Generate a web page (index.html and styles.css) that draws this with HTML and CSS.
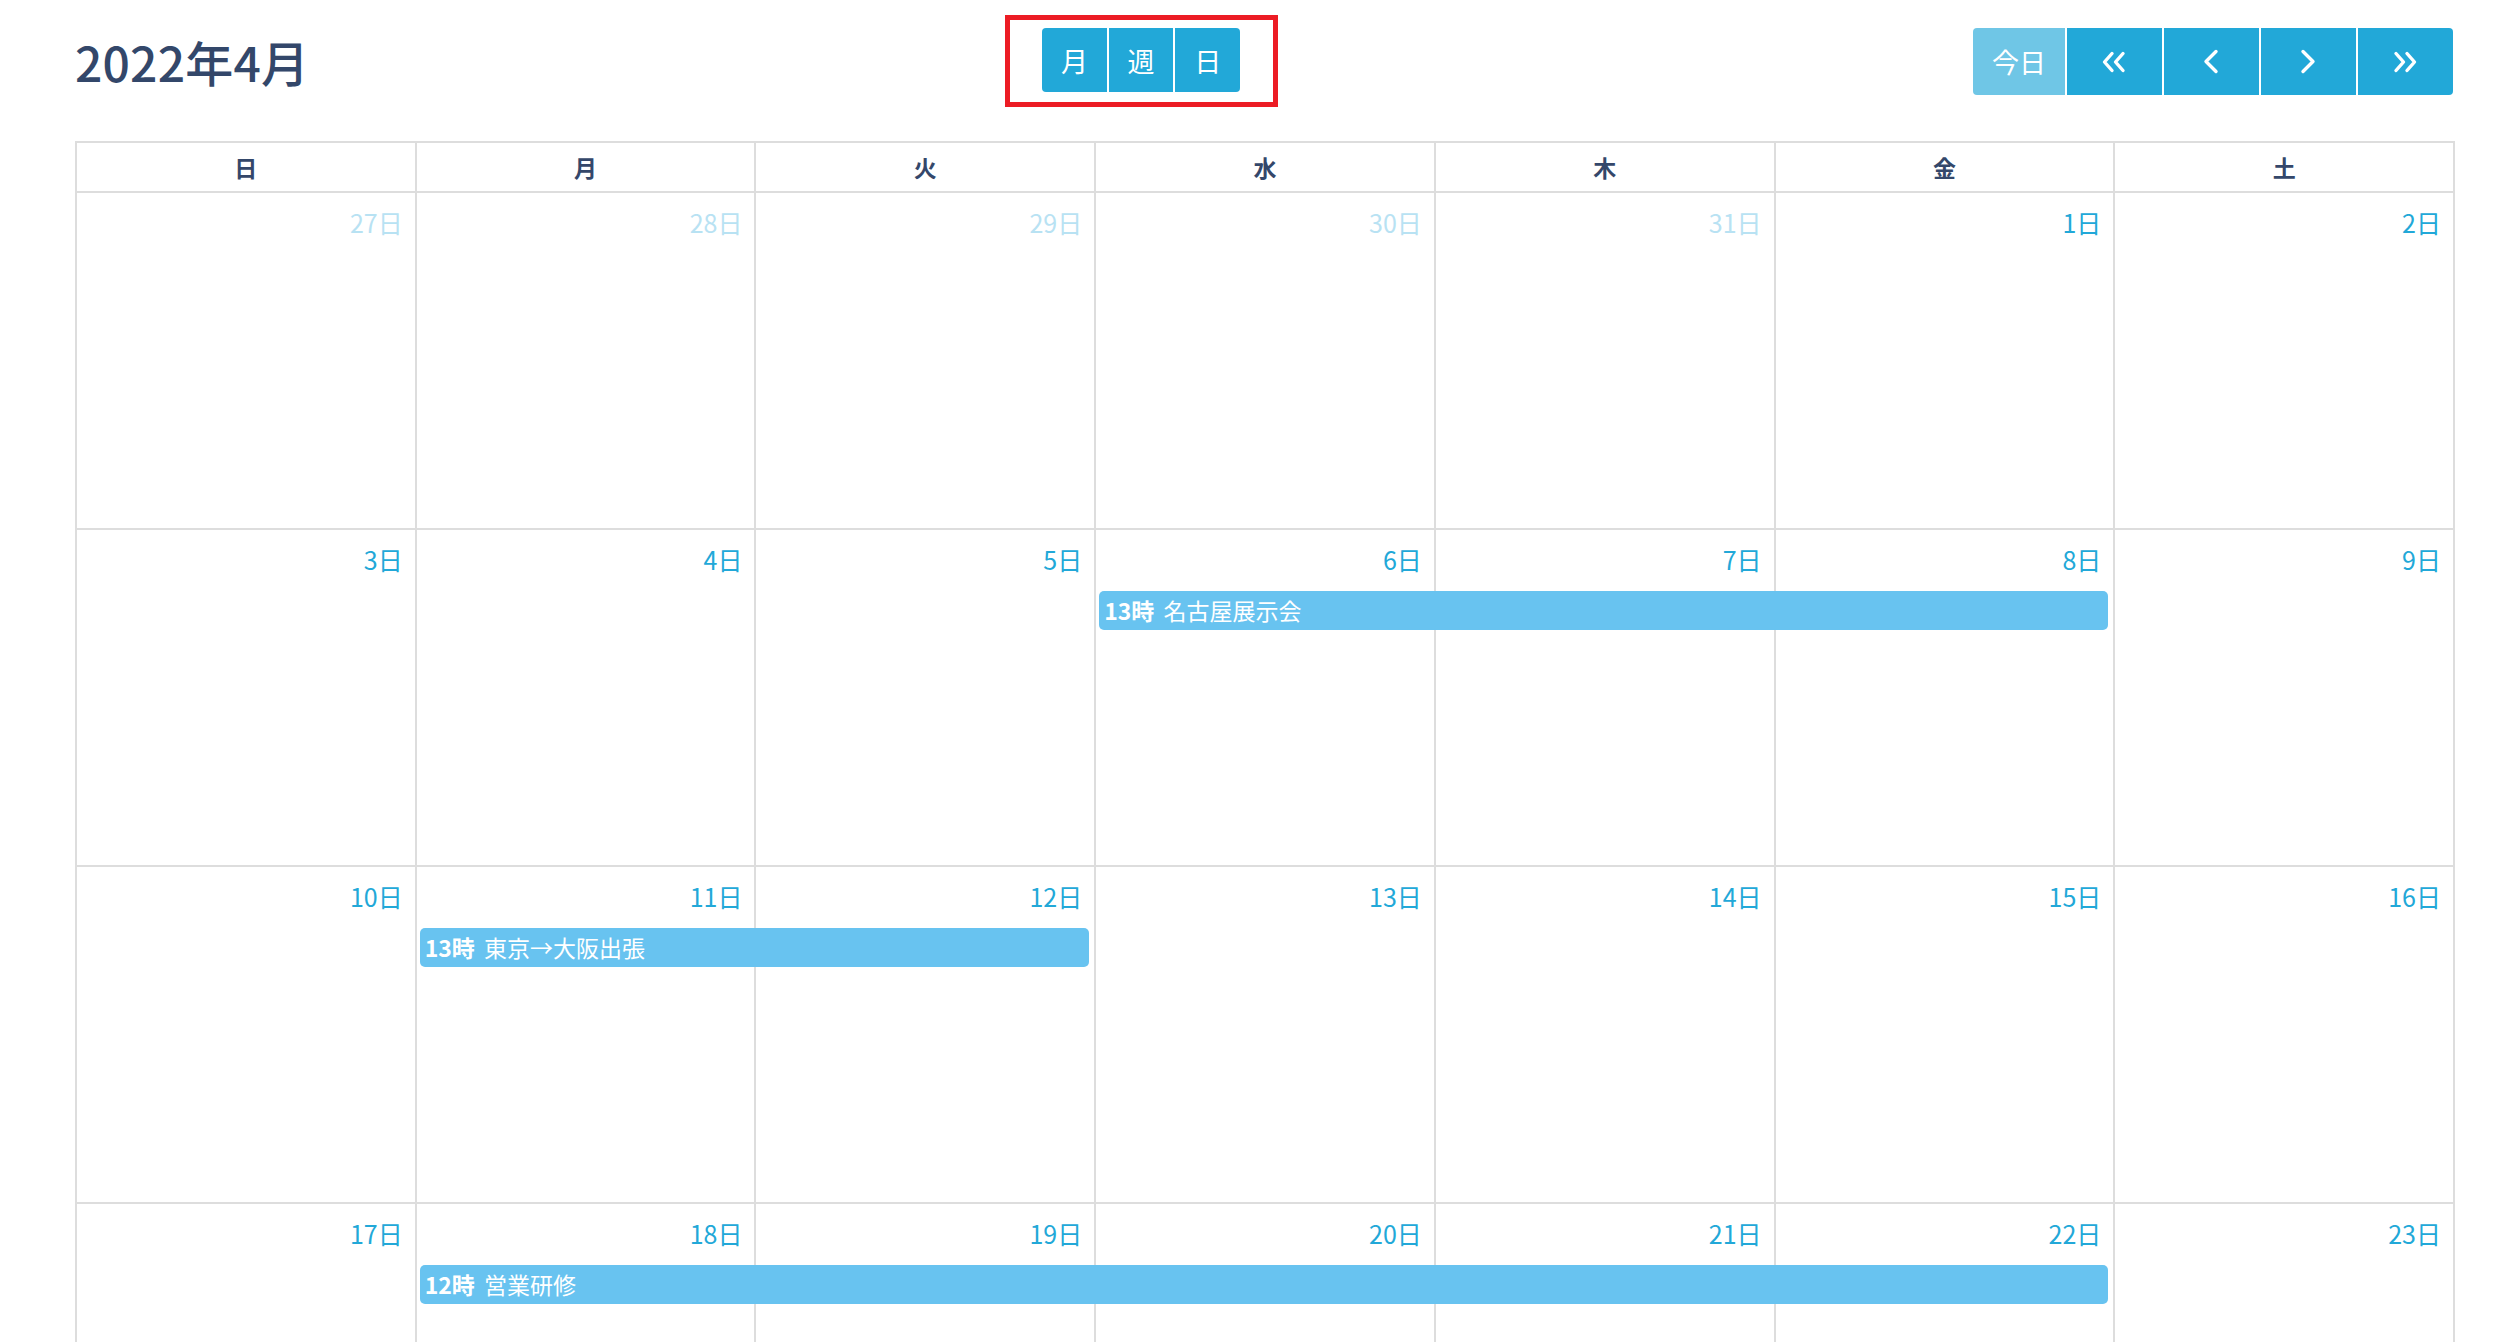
FILE: index.html
```html
<!DOCTYPE html>
<html lang="ja">
<head>
<meta charset="utf-8">
<title>カレンダー</title>
<link rel="stylesheet" href="styles.css">
</head>
<body>
<div class="page">
  <div class="toolbar">
    <h2 class="title">2022年4月</h2>
    <div class="view-wrap">
      <div class="btn-group">
        <button class="btn">月</button>
        <button class="btn">週</button>
        <button class="btn">日</button>
      </div>
      <div class="highlight"></div>
    </div>
    <div class="btn-group nav">
      <button class="btn btn-today">今日</button>
      <button class="btn btn-nav" aria-label="前年"><svg width="24" height="22" viewBox="0 0 24 22"><path d="M10 2.5 L2.5 11 L10 19.5 M21 2.5 L13.5 11 L21 19.5" fill="none" stroke="#fff" stroke-width="3.4" stroke-linecap="round" stroke-linejoin="round"/></svg></button>
      <button class="btn btn-nav" aria-label="前月"><svg width="16" height="25" viewBox="0 0 16 25"><path d="M13 2.5 L3 12.5 L13 22.5" fill="none" stroke="#fff" stroke-width="3.4" stroke-linecap="round" stroke-linejoin="round"/></svg></button>
      <button class="btn btn-nav" aria-label="翌月"><svg width="16" height="25" viewBox="0 0 16 25"><path d="M3 2.5 L13 12.5 L3 22.5" fill="none" stroke="#fff" stroke-width="3.4" stroke-linecap="round" stroke-linejoin="round"/></svg></button>
      <button class="btn btn-nav" aria-label="翌年"><svg width="24" height="22" viewBox="0 0 24 22"><path d="M3 2.5 L10.5 11 L3 19.5 M14 2.5 L21.5 11 L14 19.5" fill="none" stroke="#fff" stroke-width="3.4" stroke-linecap="round" stroke-linejoin="round"/></svg></button>
    </div>
  </div>

  <div class="cal">
    <div class="head">
      <div class="hcell">日</div>
      <div class="hcell">月</div>
      <div class="hcell">火</div>
      <div class="hcell">水</div>
      <div class="hcell">木</div>
      <div class="hcell">金</div>
      <div class="hcell">土</div>
    </div>

    <div class="week">
      <div class="day other c1">27日</div>
      <div class="day other c2">28日</div>
      <div class="day other c3">29日</div>
      <div class="day other c4">30日</div>
      <div class="day other c5">31日</div>
      <div class="day c6">1日</div>
      <div class="day c7">2日</div>
    </div>

    <div class="week">
      <div class="day c1">3日</div>
      <div class="day c2">4日</div>
      <div class="day c3">5日</div>
      <div class="day c4">6日</div>
      <div class="day c5">7日</div>
      <div class="day c6">8日</div>
      <div class="day c7">9日</div>
      <div class="event e-wed-fri"><b>13時</b> 名古屋展示会</div>
    </div>

    <div class="week">
      <div class="day c1">10日</div>
      <div class="day c2">11日</div>
      <div class="day c3">12日</div>
      <div class="day c4">13日</div>
      <div class="day c5">14日</div>
      <div class="day c6">15日</div>
      <div class="day c7">16日</div>
      <div class="event e-mon-tue"><b>13時</b> 東京→大阪出張</div>
    </div>

    <div class="week">
      <div class="day c1">17日</div>
      <div class="day c2">18日</div>
      <div class="day c3">19日</div>
      <div class="day c4">20日</div>
      <div class="day c5">21日</div>
      <div class="day c6">22日</div>
      <div class="day c7">23日</div>
      <div class="event e-mon-fri"><b>12時</b> 営業研修</div>
    </div>
  </div>
</div>
</body>
</html>
```

FILE: styles.css
```css
* { box-sizing: border-box; }

html, body {
  margin: 0;
  padding: 0;
  background: #fff;
}

body {
  font-family: "Noto Sans CJK JP", "Noto Sans", sans-serif;
  color: #34476a;
}

.page {
  padding: 0 61px 0 75px;
}

.toolbar {
  display: flex;
  justify-content: space-between;
  align-items: center;
  padding-top: 28px;
  height: 95px;
  margin-bottom: 46px;
}

.title {
  margin: 0;
  font-size: 48px;
  font-weight: 500;
  line-height: 67px;
  color: #33476a;
  letter-spacing: 0.2px;
}

.view-wrap {
  position: relative;
  margin-top: -3px;
}

.btn-group {
  display: flex;
  gap: 2px;
}

.btn {
  border: 0;
  margin: 0;
  padding: 0;
  background: #22a8d8;
  color: #fff;
  font-family: "Noto Sans CJK JP", "Noto Sans", sans-serif;
  font-size: 27px;
  line-height: 1;
  display: flex;
  align-items: center;
  justify-content: center;
  width: 64.7px;
  height: 64px;
}

.btn-group .btn:first-child {
  border-radius: 4px 0 0 4px;
}

.btn-group .btn:last-child {
  border-radius: 0 4px 4px 0;
}

.nav {
  margin-right: 2px;
}

.nav .btn {
  height: 67px;
  width: 95px;
}

.nav .btn-today {
  width: 92px;
  background: #6fc6e6;
  font-size: 27px;
}

.highlight {
  position: absolute;
  left: -37px;
  top: -13px;
  right: -38px;
  bottom: -15px;
  border: 5px solid #ec1c24;
  pointer-events: none;
}

.cal {
  border-top: 2px solid #dddddd;
  border-left: 2px solid #dddddd;
}

.head,
.week {
  display: grid;
  grid-template-columns: repeat(7, 1fr);
}

.hcell {
  height: 50px;
  border-right: 2px solid #dddddd;
  border-bottom: 2px solid #dddddd;
  display: flex;
  align-items: center;
  justify-content: center;
  font-size: 23px;
  font-weight: 700;
  color: #34476a;
}

.week {
  grid-template-rows: 61px 39px 237px;
}

.day {
  grid-row: 1 / 4;
  border-right: 2px solid #dddddd;
  border-bottom: 2px solid #dddddd;
  text-align: right;
  padding: 14px 12px 0 0;
  font-size: 25px;
  line-height: 30px;
  color: #22a8d8;
}

.day.other {
  color: #b8e2f3;
}

.c1 { grid-column: 1; }
.c2 { grid-column: 2; }
.c3 { grid-column: 3; }
.c4 { grid-column: 4; }
.c5 { grid-column: 5; }
.c6 { grid-column: 6; }
.c7 { grid-column: 7; }

.event {
  grid-row: 2;
  z-index: 1;
  margin: 0 7px 0 3px;
  background: #68c3f0;
  border-radius: 5px;
  color: #fff;
  font-size: 23px;
  line-height: 39px;
  padding-left: 5px;
  white-space: nowrap;
  overflow: hidden;
}

.event b {
  font-weight: 700;
  margin-right: 4px;
}

.e-wed-fri { grid-column: 4 / 7; }
.e-mon-tue { grid-column: 2 / 4; }
.e-mon-fri { grid-column: 2 / 7; }
```
